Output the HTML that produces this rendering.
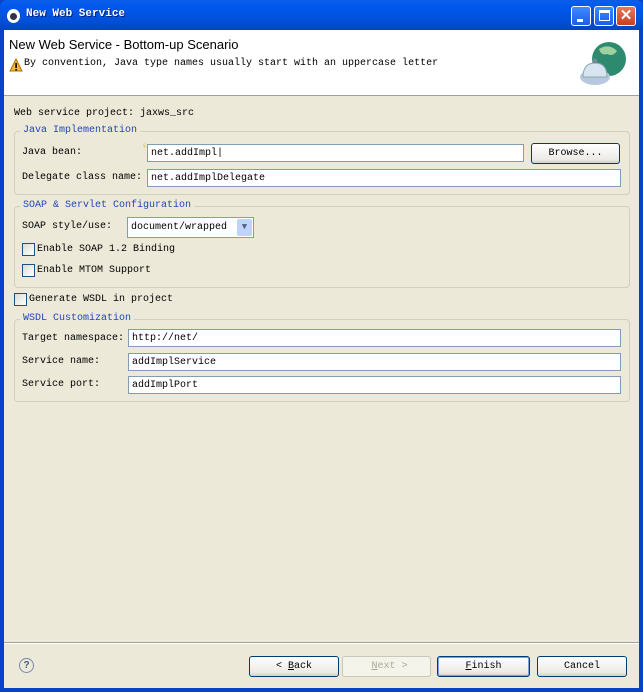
<!DOCTYPE html>
<html><head><style>
*{box-sizing:border-box;margin:0;padding:0}
body{width:643px;height:692px;overflow:hidden;background:#0842c8;font-family:"Liberation Mono","Noto Sans CJK SC",monospace;font-size:10px;color:#000;position:relative}
.abs{position:absolute}
#title{left:0;top:0;width:643px;height:30px;background:linear-gradient(#0a5fe8,#0058ee 20%,#0250d8 70%,#0244c0);border-radius:7px 7px 0 0}
#client{left:4px;top:30px;width:635px;height:658px;background:#ece9d8}
#hdr{left:4px;top:30px;width:635px;height:66px;background:#fff;border-bottom:1px solid #a0a0a0}
.wb{top:6px;width:20px;height:20px;border:1px solid #fff;border-radius:3px;background:linear-gradient(#3c8bff,#1d5de8)}
.grp{border:1px solid #d0d0bf;border-radius:4px}
.leg{background:#ece9d8;color:#1f45b8;padding:0 3px;font-size:10px}
.in{background:#fff;border:1px solid #7f9db9;padding:2px 3px;height:18px;line-height:13px}
.cb{width:13px;height:13px;border:1px solid #1c5180;background:linear-gradient(135deg,#dcdcd4,#fff)}
.btn{height:21px;border:1px solid #003c74;border-radius:3px;background:linear-gradient(#fff,#ecebe6 80%,#d6d0c5);text-align:center;line-height:19px;font-size:10px}
</style></head><body>
<div class="abs" id="title"></div>
<div class="abs" style="left:7px;top:9px;width:13px;height:14px;border-radius:50%;background:#fff"></div>
<div class="abs" style="left:10px;top:13px;width:7px;height:7px;border-radius:50%;background:#334"></div>
<div class="abs" style="left:26px;top:8px;color:#fff;font-weight:bold;font-size:11px;font-family:'Liberation Mono',monospace;text-shadow:1px 1px #0a1f70">New Web Service</div>
<div class="abs wb" style="left:571px"><div style="position:absolute;left:5px;top:12px;width:6px;height:3px;background:#fff"></div></div>
<div class="abs wb" style="left:594px"><div style="position:absolute;left:4px;top:3px;width:11px;height:11px;border:1px solid #fff;border-top-width:3px"></div></div>
<div class="abs wb" style="left:616px;background:linear-gradient(#e67a5a,#c8401e);color:#fff;font:bold 15px 'Liberation Sans',sans-serif;text-align:center;line-height:18px">✕</div>
<div class="abs" id="client"></div>
<div class="abs" id="hdr"></div>
<div class="abs" style="left:9px;top:37px;font:13px 'Liberation Sans',sans-serif">New Web Service - Bottom-up Scenario</div>
<svg class="abs" style="left:9px;top:58px" width="14" height="14"><path d="M7 1L13 13H1Z" fill="#f5b830" stroke="#b07010"/><rect x="6.3" y="5" width="1.6" height="5" fill="#000"/><rect x="6.3" y="11" width="1.6" height="1.5" fill="#000"/></svg>
<div class="abs" style="left:24px;top:58px">By convention, Java type names usually start with an uppercase letter</div>
<svg class="abs" style="left:577px;top:37px" width="50" height="52"><circle cx="32" cy="22" r="17" fill="#2e8a6e"/><path d="M22 12q10-6 18 2q-4 6-10 3q-6 2-8-5z" fill="#9fd0a0"/><ellipse cx="18" cy="40" rx="15" ry="8" fill="#b8c8e0"/><path d="M6 40q0-14 12-14q12 0 12 14z" fill="#d8e4f2" stroke="#8aa"/><circle cx="18" cy="24" r="2.5" fill="#789"/></svg>
<div class="abs" style="left:14px;top:108px">Web service project: jaxws_src</div>

<div class="abs grp" style="left:14px;top:131px;width:616px;height:64px"></div>
<div class="abs leg" style="left:20px;top:125px">Java Implementation</div>
<div class="abs" style="left:22px;top:147px">Java bean:</div>
<div class="abs" style="left:142px;top:142px;color:#d8a020;font-size:8px">♀</div>
<div class="abs in" style="left:147px;top:144px;width:377px">net.addImpl|</div>
<div class="abs btn" style="left:531px;top:143px;width:89px">Browse...</div>
<div class="abs" style="left:22px;top:172px">Delegate class name:</div>
<div class="abs in" style="left:147px;top:169px;width:474px">net.addImplDelegate</div>

<div class="abs grp" style="left:14px;top:206px;width:616px;height:82px"></div>
<div class="abs leg" style="left:20px;top:200px">SOAP &amp; Servlet Configuration</div>
<div class="abs" style="left:22px;top:221px">SOAP style/use:</div>
<div class="abs in" style="left:127px;top:217px;width:127px;height:21px;line-height:15px">document/wrapped</div>
<div class="abs" style="left:237px;top:219px;width:15px;height:17px;background:#c1d3fb;border-radius:2px;color:#4d6185;text-align:center;font-size:9px;line-height:17px">▼</div>
<div class="abs cb" style="left:22px;top:243px"></div><div class="abs" style="left:37px;top:244px">Enable SOAP 1.2 Binding</div>
<div class="abs cb" style="left:22px;top:264px"></div><div class="abs" style="left:37px;top:265px">Enable MTOM Support</div>
<div class="abs cb" style="left:14px;top:293px"></div><div class="abs" style="left:29px;top:294px">Generate WSDL in project</div>

<div class="abs grp" style="left:14px;top:319px;width:616px;height:83px"></div>
<div class="abs leg" style="left:20px;top:313px">WSDL Customization</div>
<div class="abs" style="left:22px;top:333px">Target namespace:</div>
<div class="abs in" style="left:128px;top:329px;width:493px">http://net/</div>
<div class="abs" style="left:22px;top:356px">Service name:</div>
<div class="abs in" style="left:128px;top:353px;width:493px">addImplService</div>
<div class="abs" style="left:22px;top:379px">Service port:</div>
<div class="abs in" style="left:128px;top:376px;width:493px">addImplPort</div>

<div class="abs" style="left:4px;top:642px;width:635px;border-top:1px solid #a0a0a0;border-bottom:1px solid #fff"></div>
<div class="abs" style="left:19px;top:658px;width:15px;height:15px;border:1px solid #7a8aa8;border-radius:50%;text-align:center;font:bold 10px 'Liberation Sans',sans-serif;line-height:13px;color:#4a5a80">?</div>
<div class="abs btn" style="left:249px;top:656px;width:90px">&lt; <u>B</u>ack</div>
<div class="abs btn" style="left:342px;top:656px;width:89px;border-color:#c9c7ba;color:#aca899;background:#f5f4ea">&nbsp;<u>N</u>ext &gt;</div>
<div class="abs btn" style="left:437px;top:656px;width:93px;box-shadow:inset 0 0 0 1px #7ca0e0"><u>F</u>inish</div>
<div class="abs btn" style="left:537px;top:656px;width:90px">Cancel</div>
</body></html>
